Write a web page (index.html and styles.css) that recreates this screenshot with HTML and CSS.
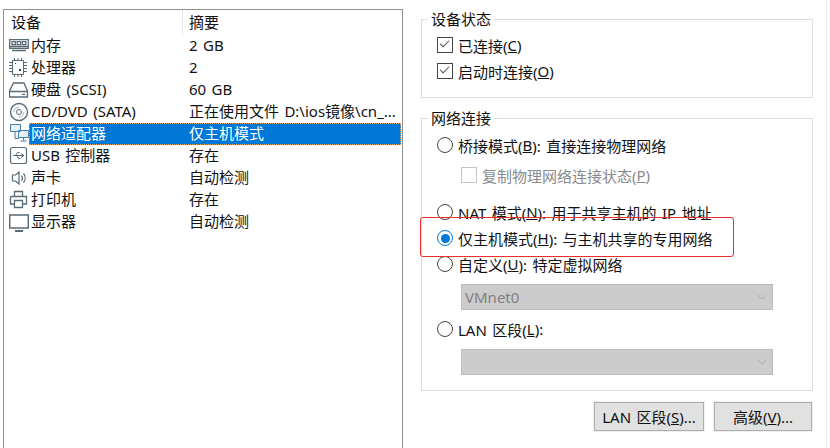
FILE: index.html
```html
<!DOCTYPE html>
<html lang="zh-CN">
<head>
  <meta charset="UTF-8">
  <title>网络适配器</title>
  <link rel="stylesheet" href="styles.css">
</head>

<body>
  <div class="window">
    <div class="device-list">
      <div class="list-head">
        <span class="col-device">设备</span>
        <span class="col-summary">摘要</span>
      </div>

      <div class="row">
        <svg class="icon" viewBox="0 0 20 20"><path d="M.7 3.600h18.600v8.800H.7zM3 5.700h3.400v3H3zM8.200 5.700h3.400v3H8.200zM13.400 5.700h3.400v3h-3.400zM.7 10.500h18.600M3 14.500h14" fill="none" stroke="#5a6b78" stroke-width="1.300"/></svg>
        <span class="name">内存</span><span class="summary">2 GB</span>
      </div>
      <div class="row">
        <svg class="icon" viewBox="0 0 20 20"><path d="M3.500 2.500h11v14h-11zM0 4.500h3M0 7.500h3M0 10.500h3M0 13.500h3M15 4.500h3M15 7.500h3M15 10.500h3M15 13.500h3M5.500 0v2M9 0v2M12.500 0v2M5.500 17v2M9 17v2M12.500 17v2" fill="none" stroke="#5a6b78"/><rect x="10" y="11" width="2" height="2" fill="#33414c"/><rect x="6" y="5" width="1" height="1" fill="#33414c"/></svg>
        <span class="name">处理器</span><span class="summary">2</span>
      </div>
      <div class="row">
        <svg class="icon" viewBox="0 0 20 20"><path d="M4.500 3h10.500l3.500 8v6h-18v-6zM.7 11.500h17.600M13 14.300h3" fill="none" stroke="#5a6b78" stroke-width="1.300"/></svg>
        <span class="name">硬盘 (SCSI)</span><span class="summary">60 GB</span>
      </div>
      <div class="row">
        <svg class="icon" viewBox="0 0 20 20"><circle cx="10" cy="10" r="8.500" fill="none" stroke="#5a6b78" stroke-width="1.400"/><circle cx="10" cy="10" r="2.500" fill="none" stroke="#5a6b78"/><path d="M5 10a5 5 0 0 1 5-5M15 10a5 5 0 0 1-5 5" fill="none" stroke="#a5aeb5"/></svg>
        <span class="name">CD/DVD (SATA)</span><span class="summary">正在使用文件 D:\ios镜像\cn_...</span>
      </div>
      <div class="row selected-row">
        <svg class="icon" viewBox="0 0 20 20"><path d="M1.500 .5h10v7h-10zM9.500 6.500h10v7h-10zM6 7.500v7h4M14.500 13.500v3M11.500 17h6" fill="#e6f0f8" stroke="#4a7fa8"/></svg>
        <div class="selected-text">
          <span class="name">网络适配器</span><span class="summary">仅主机模式</span>
        </div>
      </div>
      <div class="row">
        <svg class="icon" viewBox="0 0 20 20"><rect x="1.500" y="1.500" width="16" height="16" rx="2" fill="none" stroke="#5a6b78" stroke-width="1.200"/><path d="M4 9.500h10M12 7.500l3 2-3 2M6.500 9.500l2-3h2M7.500 9.500l2 3h2" fill="none" stroke="#5a6b78"/></svg>
        <span class="name">USB 控制器</span><span class="summary">存在</span>
      </div>
      <div class="row">
        <svg class="icon" viewBox="0 0 20 20"><path d="M3.500 7h3l3.500-3v12l-3.500-3h-3zM12.500 7.500a4 4 0 0 1 0 5M14.500 5.500a7 7 0 0 1 0 9" fill="none" stroke="#5a6b78" stroke-width="1.200"/></svg>
        <span class="name">声卡</span><span class="summary">自动检测</span>
      </div>
      <div class="row">
        <svg class="icon" viewBox="0 0 20 20"><path d="M5.500 6.500v-5h8v5M1.500 6.500h16v7.500h-4M5.500 14h-4v-7.500M5.500 10.500h8v7h-8z" fill="none" stroke="#5a6b78" stroke-width="1.300"/></svg>
        <span class="name">打印机</span><span class="summary">存在</span>
      </div>
      <div class="row">
        <svg class="icon" viewBox="0 0 20 20"><path d="M.7 3h18.600v13H.7z" fill="none" stroke="#5a6b78" stroke-width="1.500"/><path d="M6 19h8" stroke="#5a6b78" stroke-width="2"/></svg>
        <span class="name">显示器</span><span class="summary">自动检测</span>
      </div>
    </div>

    <div class="settings">
      <fieldset class="group status-group">
        <legend>设备状态</legend>
        <div class="option"><span class="check checked"></span>已连接(<u>C</u>)</div>
        <div class="option"><span class="check checked"></span>启动时连接(<u>O</u>)</div>
      </fieldset>

      <fieldset class="group network-group">
        <legend>网络连接</legend>
        <div class="option"><span class="radio"></span>桥接模式(<u>B</u>): 直接连接物理网络</div>
        <div class="option sub-option disabled"><span class="check"></span>复制物理网络连接状态(<u>P</u>)</div>
        <div class="option nat-option"><span class="radio"></span>NAT 模式(<u>N</u>): 用于共享主机的 IP 地址</div>
        <div class="option"><span class="radio on"></span>仅主机模式(<u>H</u>): 与主机共享的专用网络</div>
        <div class="option"><span class="radio"></span>自定义(<u>U</u>): 特定虚拟网络</div>
        <div class="select">VMnet0<svg class="arrow" viewBox="0 0 12 7"><path d="M1 1l5 5 5-5" fill="none" stroke="#a8a8a8"/></svg></div>
        <div class="option lan-option"><span class="radio"></span>LAN 区段(<u>L</u>):</div>
        <div class="select"><svg class="arrow" viewBox="0 0 12 7"><path d="M1 1l5 5 5-5" fill="none" stroke="#a8a8a8"/></svg></div>
      </fieldset>

      <div class="buttons">
        <button type="button" class="lan-button">LAN 区段(<u>S</u>)...</button>
        <button type="button" class="adv-button">高级(<u>V</u>)...</button>
      </div>
    </div>

    <div class="red-box"></div>
    <div class="edge-line"></div>
  </div>
</body>
</html>
```

FILE: styles.css
```css
body {
  margin: 0;
  background-color: #fff;
  font-family: "Noto Sans", "Noto Sans CJK SC", sans-serif;
  font-size: 15px;
  word-spacing: 1.500px;
  color: #111;
}

.window {
  position: relative;
  display: flex;
  width: 830px;
  height: 448px;
  overflow: hidden;
  padding: 9px 0 0 3px;
  box-sizing: border-box;
}

.device-list {
  width: 400px;
  height: 439px;
  box-sizing: border-box;
  border: 1px solid #8e8e8e;
  border-bottom: none;
  flex-shrink: 0;
}

.list-head {
  display: flex;
  height: 25px;
  align-items: center;
}

.col-device {
  width: 171px;
  padding-left: 7px;
  border-right: 1px solid #e5e5e5;
  line-height: 25px;
  height: 25px;
}

.col-summary {
  padding-left: 6px;
  line-height: 25px;
  height: 25px;
}

.row {
  display: flex;
  align-items: center;
  height: 22px;
  padding-left: 5px;
  line-height: 20px;
}

.icon {
  width: 20px;
  height: 20px;
  flex-shrink: 0;
}

.name {
  width: 158px;
  padding-left: 2px;
  flex-shrink: 0;
  white-space: nowrap;
  height: 22px;
}

.summary {
  white-space: nowrap;
  height: 22px;
}

.selected-text {
  display: flex;
  align-items: center;
  flex: 1;
  height: 22px;
  margin-right: 1px;
  box-sizing: border-box;
  background-color: #0078d7;
  color: #fff;
  outline: 1px dotted #e8a25a;
  outline-offset: -1px;
}

.settings {
  width: 392px;
  margin-left: 18px;
  flex-shrink: 0;
}

.group {
  margin: 0;
  padding: 0;
  border: 1px solid #dcdcdc;
  box-sizing: border-box;
}

.group legend {
  margin-left: -9px;
  padding: 0 3px;
  line-height: 20px;
}

.status-group {
  height: 89px;
  padding: 3px 0 0 15px;
}

.network-group {
  height: 283px;
  margin-top: 10px;
  padding: 4px 0 0 15px;
}

.option {
  display: flex;
  align-items: center;
  height: 26px;
  white-space: pre;
}

.check {
  width: 14px;
  height: 14px;
  margin-right: 5px;
  border: 1px solid #444;
  background: #fff;
  position: relative;
  flex-shrink: 0;
}

.check.checked::after {
  content: "";
  position: absolute;
  left: 2px;
  top: 2px;
  width: 8px;
  height: 4px;
  border-left: 1px solid #555;
  border-bottom: 1px solid #555;
  transform: rotate(-45deg);
}

.radio {
  width: 14px;
  height: 14px;
  margin-right: 5px;
  border: 1px solid #444;
  border-radius: 50%;
  background: #fff;
  position: relative;
  flex-shrink: 0;
}

.radio.on {
  border-color: #0078d7;
}

.radio.on::after {
  content: "";
  position: absolute;
  left: 2.500px;
  top: 2.500px;
  width: 9px;
  height: 9px;
  border-radius: 50%;
  background: #0078d7;
}

.sub-option {
  margin-left: 24px;
  margin-top: 4px;
}

.disabled {
  color: #8a8a8a;
}

.disabled .check {
  border-color: #c4c4c4;
}

.nat-option {
  margin-top: 11px;
}

.select {
  position: relative;
  width: 312px;
  height: 26px;
  margin: 7px 0 0 24px;
  padding-left: 3px;
  box-sizing: border-box;
  border: 1px solid #bcbcbc;
  background-color: #cccccc;
  color: #808080;
  line-height: 24px;
}

.arrow {
  position: absolute;
  right: 5px;
  top: 9px;
  width: 10px;
  height: 6px;
}

.lan-option {
  margin-top: 6px;
}

.buttons {
  display: flex;
  justify-content: flex-end;
  gap: 10px;
  margin: 11px 1px 0 0;
}

.buttons button {
  height: 29px;
  padding: 0;
  border: 1px solid #adadad;
  outline: 1px solid #f0f0f0;
  background-color: #e1e1e1;
  color: #111;
  font: inherit;
  word-spacing: inherit;
}

.lan-button {
  width: 110px;
}

.adv-button {
  width: 98px;
}

.red-box {
  position: absolute;
  left: 420px;
  top: 217px;
  width: 314px;
  height: 40px;
  box-sizing: border-box;
  border: 1px solid #e8302a;
  border-radius: 3px;
}

.edge-line {
  position: absolute;
  left: 826px;
  top: 0;
  bottom: 0;
  width: 1px;
  background-color: #ececec;
}
```
